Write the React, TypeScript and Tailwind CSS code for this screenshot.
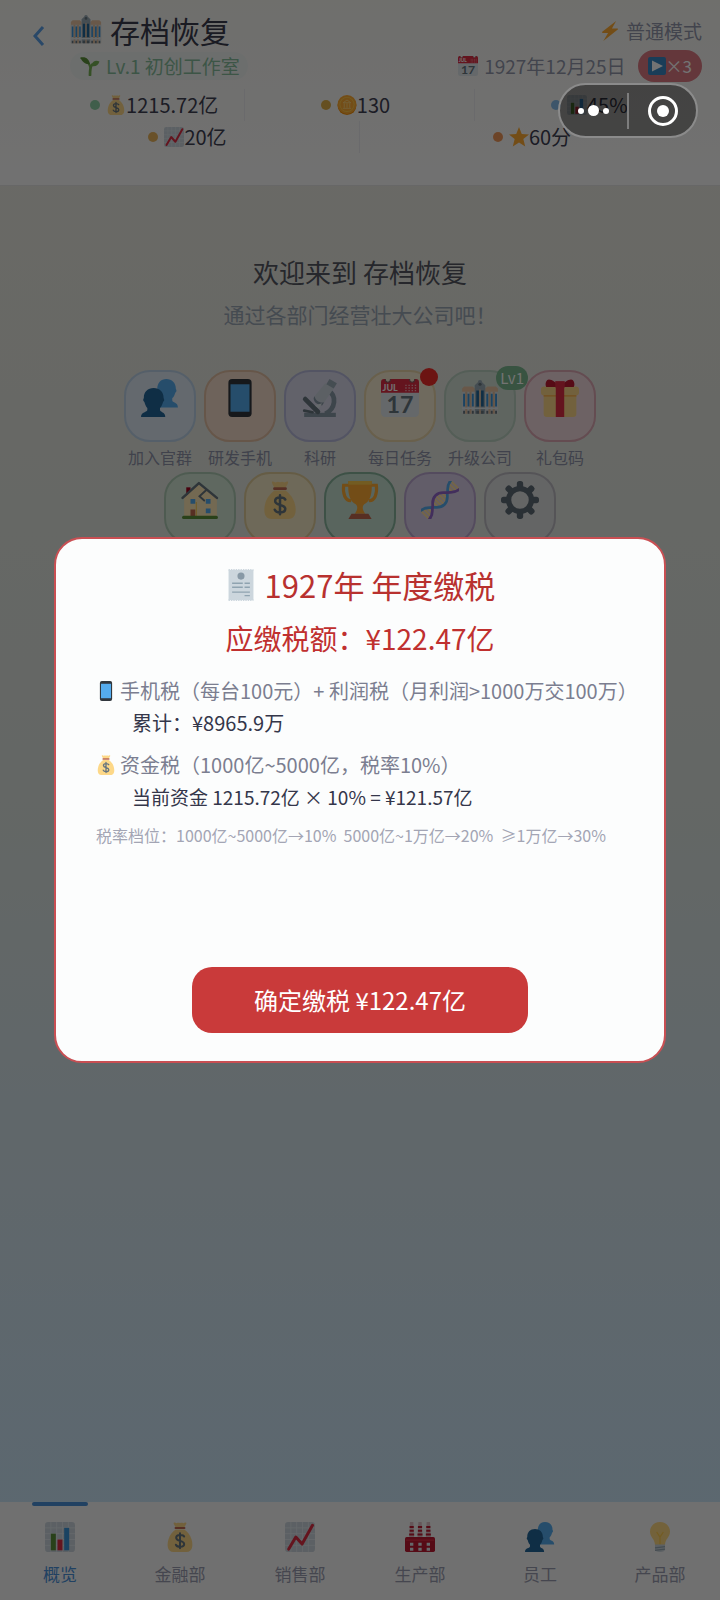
import React, { useState } from 'react';

type IconName =
  | 'building'
  | 'sprout'
  | 'bag'
  | 'coin'
  | 'bars'
  | 'trend'
  | 'star'
  | 'bolt'
  | 'calendar'
  | 'play'
  | 'people'
  | 'phone'
  | 'microscope'
  | 'gift'
  | 'house'
  | 'trophy'
  | 'dna'
  | 'gear'
  | 'receipt'
  | 'factory'
  | 'bulb';

type Tile = {
  label?: string;
  icon: IconName;
  color: string;
  dot?: boolean;
  badge?: string;
};

const TILES_TOP: Tile[] = [
  { label: '加入官群', icon: 'people', color: 'bg-[#dde8f4] border-[#bcd3e8]' },
  { label: '研发手机', icon: 'phone', color: 'bg-[#f4dccb] border-[#e2bea2]' },
  { label: '科研', icon: 'microscope', color: 'bg-[#d9d9ec] border-[#b8badc]' },
  { label: '每日任务', icon: 'calendar', color: 'bg-[#f6ebd0] border-[#e8d4a8]', dot: true },
  { label: '升级公司', icon: 'building', color: 'bg-[#d3e0d6] border-[#bad0c0]', badge: 'Lv1' },
  { label: '礼包码', icon: 'gift', color: 'bg-[#f2dade] border-[#dda8b4]' },
];

const TILES_BOTTOM: Tile[] = [
  { icon: 'house', color: 'bg-[#d3e6d5] border-[#aecbb3]' },
  { icon: 'bag', color: 'bg-[#f3e8c6] border-[#e0cd9a]' },
  { icon: 'trophy', color: 'bg-[#c5dfd1] border-[#88b49c]' },
  { icon: 'dna', color: 'bg-[#dacfe8] border-[#bba6d0]' },
  { icon: 'gear', color: 'bg-[#dedfe0] border-[#bcbac2]' },
];

const NAV: { label: string; icon: IconName }[] = [
  { label: '概览', icon: 'bars' },
  { label: '金融部', icon: 'bag' },
  { label: '销售部', icon: 'trend' },
  { label: '生产部', icon: 'factory' },
  { label: '员工', icon: 'people' },
  { label: '产品部', icon: 'bulb' },
];

const GEAR_TEETH = [0, 45, 90, 135, 180, 225, 270, 315];

function drawIcon(name: IconName) {
  switch (name) {
    case 'building':
      return (
        <>
          <path fill="#e8c3a2" d="M1 9l2-2h8l2 2v24H1zM23 9l2-2h8l2 2v24H23z" />
          <path fill="#99aab5" d="M13 6l3-3a2 2 0 0 1 4 0l3 3v27H13z" />
          <path fill="#d8dfe4" d="M1 12h12v21H1zM23 12h12v21H23z" />
          <path fill="#e0bd9c" d="M4 12h2v21H4zM8 12h2v21H8zM26 12h2v21h-2zM30 12h2v21h-2zM17.200 10h1.600v23h-1.600z" />
          <path fill="#3b94d9" d="M2 14h1.800v12H2zM6.200 14H8v12H6.200zM10.300 14h1.800v12h-1.800zM24 14h1.800v12H24zM28.200 14H30v12h-1.800zM32.300 14h1.800v12h-1.800z" />
          <path fill="#226699" d="M14.500 11h2.500v15h-2.500zM19 11h2.500v15H19z" />
          <path fill="#66757f" d="M2 30h1.800v3H2zM6.200 30H8v3H6.200zM10.300 30h1.800v3h-1.800zM14.500 30h2.500v3h-2.500zM19 30h2.500v3H19zM24 30h1.800v3H24zM28.200 30H30v3h-1.800zM32.300 30h1.800v3h-1.800z" />
          <path fill="#e1e8ed" d="M1 27h34v1.500H1z" />
          <circle cx="18" cy="5" r="1.500" fill="#66757f" />
        </>
      );
    case 'sprout':
      return (
        <>
          <path d="M18 34c0-7 0-13 3-18" fill="none" stroke="#77b255" strokeWidth="5" strokeLinecap="round" />
          <path d="M18 20C16 11 10 6 2 4" fill="none" stroke="#77b255" strokeWidth="3" strokeLinecap="round" />
          <path fill="#5c913b" d="M1 3c8-3 16 2 17 12C10 15 4 11 1 3z" />
          <path fill="#77b255" d="M35 10c-6-3-13-1-15 8 8 2 13-1 15-8z" />
        </>
      );
    case 'bag':
      return (
        <>
          <path fill="#fdd888" d="M31.900 21c-1.500-5.400-5.200-9.500-8.700-12H12.800C9.300 11.500 5.600 15.600 4.100 21 2 28 3 36 10 36h16c7 0 8-8 5.900-15z" />
          <path fill="#fdd888" d="M10.500.800c1.500-1 2.500 1 3.800.5 1.200-.6 2-.8 3.700 0 1.700-.8 2.500-.6 3.700 0 1.300.5 2.300-1.500 3.800-.5.800 1.400-2 4.300-2.600 6.200H13.100c-.6-1.900-3.400-4.800-2.600-6.200z" />
          <rect x="11.500" y="6" width="13" height="2.500" rx="1.200" fill="#bf6952" />
          <path d="M23 17.500c-.8-2.300-9.600-3.400-9.600 1.400 0 5 9.600 2.500 9.600 7.500 0 4.800-9 4-10 .8M18 13.500v18" fill="none" stroke="#67757f" strokeWidth="2.400" strokeLinecap="round" />
        </>
      );
    case 'coin':
      return (
        <>
          <circle cx="18" cy="19" r="17" fill="#f4900c" />
          <circle cx="18" cy="17" r="17" fill="#ffac33" />
          <circle cx="18" cy="17" r="13.500" fill="#ffcc4d" />
          <circle cx="18" cy="17" r="12" fill="#ffac33" />
          <path fill="none" stroke="#ffd983" strokeWidth="1.500" d="M11 14l7-5 7 5zM13 15v8M18 15v8M23 15v8M10.500 24h15" />
        </>
      );
    case 'bars':
      return (
        <>
          <rect width="36" height="36" rx="4" fill="#ccd6dd" />
          <path stroke="#e1e8ed" strokeWidth="1" d="M0 7h36M0 14h36M0 21h36M0 28h36M7 0v36M14 0v36M21 0v36M28 0v36" />
          <path fill="#5c913b" d="M7 14h6v20H7z" />
          <path fill="#dd2e44" d="M15 21h6v13h-6z" />
          <path fill="#3b94d9" d="M23 7h6v27h-6z" />
        </>
      );
    case 'trend':
      return (
        <>
          <rect width="36" height="36" rx="4" fill="#ccd6dd" />
          <path stroke="#e1e8ed" strokeWidth="1" d="M0 7h36M0 14h36M0 21h36M0 28h36M7 0v36M14 0v36M21 0v36M28 0v36" />
          <path d="M4.500 32.500L13 18l7.500 8.500L33 4" fill="none" stroke="#dd2e44" strokeWidth="3.600" strokeLinecap="round" strokeLinejoin="round" />
        </>
      );
    case 'star':
      return (
        <path fill="#ffac33" d="M18 0l5 12.500 13 .8-10.200 8.500L29.200 35 18 27.700 6.800 35l3.400-13.200L0 13.300l13-.8z" />
      );
    case 'bolt':
      return <path fill="#ffac33" d="M29 0L4 19.500c-1 1 0 2 1 2h9.500L6 36l26-20.500c1-1 0-2-1-2h-9.500z" />;
    case 'calendar':
      return (
        <>
          <path fill="#dfe6eb" d="M36 32a4 4 0 0 1-4 4H4a4 4 0 0 1-4-4V12h36z" />
          <path fill="#dd2e44" d="M0 13V3a3 3 0 0 1 3-3h1c0 4 5 4 5 0h18c0 4 5 4 5 0h1a3 3 0 0 1 3 3v10z" />
          <path fill="none" stroke="#8c5a62" strokeWidth="1" d="M4 0c0 4 5 4 5 0M27 0c0 4 5 4 5 0" />
          <path stroke="#f4abb4" strokeWidth="1.300" strokeDasharray="1.300 1.700" d="M23 6h11M23 8.500h11M23 11h11" />
          <text x="1.500" y="11.500" fontSize="8.500" fontWeight="700" fontFamily="Lato, sans-serif" fill="#fff">JUL</text>
          <text x="18" y="32" fontSize="22" fontWeight="700" textAnchor="middle" fontFamily="Lato, sans-serif" fill="#66757f">17</text>
        </>
      );
    case 'play':
      return (
        <>
          <rect width="36" height="36" rx="4" fill="#3b88c3" />
          <path fill="#fff" d="M8 7l22 11L8 29z" />
        </>
      );
    case 'people':
      return (
        <>
          <path
            fill="#55acee"
            d="M24 0c5.300 0 9 3.700 9 9 0 .7.600 1 .6 2.200 0 1.100-1 1.300-1.200 2-.8 2.600-1.400 3.800-2.800 5v2c0 2.800 5.400 1.500 5.400 6.800H17V20l-2-7c-.4-1-.4-3 .4-3.500C15.400 3.700 18.700 0 24 0z"
          />
          <path
            fill="#226699"
            d="M12 8.500c5.600 0 9.400 3.600 9.400 9.200 0 .8.600 1 .6 2.200 0 1.200-1 1.300-1.200 2.100-.6 2.500-1.500 4.200-2.800 5.400v1.800c0 2.800 5 1.600 5 6.800H0c0-5.200 6-4 6-6.800v-1.800C4.800 26.200 3.900 24.500 3.300 22c-.2-.8-1.200-.9-1.200-2.100 0-1.200.6-1.400.6-2.200 0-5.600 3.700-9.200 9.300-9.200z"
          />
        </>
      );
    case 'phone':
      return (
        <>
          <rect x="7" width="22" height="36" rx="3.500" fill="#31373d" />
          <rect x="9" y="5" width="18" height="26" fill="#55acee" />
        </>
      );
    case 'microscope':
      return (
        <>
          <path fill="#8899a6" d="M3 32h30v4H3z" />
          <path d="M26 11c8 5 7 17-3 22" fill="none" stroke="#8899a6" strokeWidth="4.500" />
          <path d="M4 19l12 12" stroke="#66757f" strokeWidth="4.500" strokeLinecap="round" />
          <path d="M3 30l8 1.500" stroke="#66757f" strokeWidth="2.500" strokeLinecap="round" />
          <path fill="#ccd6dd" d="M23 4l8 5-9 13c-4 1-9-2-9-6z" />
          <path fill="#8899a6" d="M13 16c0 4 5 7 9 6l-2 3c-5-1-8-3-8-7z" />
          <path fill="#99aab5" d="M27 0l7 4-3 5-7-4z" />
          <path fill="#e1e8ed" d="M20 23l-3 5-4-3z" />
        </>
      );
    case 'gift':
      return (
        <>
          <path fill="#fdd888" d="M2.500 15h31v18a3 3 0 0 1-3 3h-25a3 3 0 0 1-3-3z" />
          <path fill="#fcab40" d="M2.500 15h31v1.500h-31z" />
          <rect y="7" width="36" height="8.500" rx="3" fill="#fdd888" />
          <path fill="#dd2e44" d="M14 7h8v29h-8z" />
          <path fill="#be1931" d="M17 7.500C15 3 8-1 6 1 4 3 4 6 5 7.500zM19 7.500c2-4.500 9-8.500 11-6.500 2 2 2 5 1 6.500z" />
          <path fill="#dd2e44" d="M13.500 2h9v6h-9z" />
        </>
      );
    case 'house':
      return (
        <>
          <path fill="#a0041e" d="M5 6h4v8H5z" />
          <path fill="#ffe8b6" d="M3 16L16 3l18 12v19H3z" />
          <path fill="#ffcc4d" d="M14 20h1v14h-1z" />
          <path d="M1.500 16L17 2l17 14" fill="none" stroke="#66757f" strokeWidth="2.400" strokeLinecap="round" strokeLinejoin="round" />
          <path d="M24 8.500l-6.500 6 4.500 4" fill="none" stroke="#66757f" strokeWidth="1.800" strokeLinecap="round" />
          <path fill="#55acee" d="M9 17h4.500v4.500H9zM23.500 17H28v4.500h-4.500zM23.500 26H28v4.500h-4.500z" />
          <path fill="#c1694f" d="M9 27h4.500v7H9z" />
          <rect x="1" y="33" width="34" height="3" rx="1.500" fill="#5c913b" />
        </>
      );
    case 'trophy':
      return (
        <>
          <path d="M8 4H2.500c-1 8 1.500 15 7 14.500M28 4h5.500c1 8-1.500 15-7 14.500" fill="none" stroke="#ffac33" strokeWidth="3" />
          <path fill="#ffac33" d="M7 0h22c1 13-2 20-7 22-2 2-2 5 1 9H13c3-4 3-7 1-9C9 20 6 13 7 0z" />
          <path fill="#ffcc4d" d="M7 0h22v3.500H7z" />
          <path fill="#c1694f" d="M10 31h16l3 5H7z" />
        </>
      );
    case 'dna':
      return (
        // double helix drawn flat, then tilted
        <g transform="rotate(-45 18 18)" fill="none">
          <path
            stroke="#ffe0a0"
            strokeWidth="2"
            d="M-2 13v10M1 13.500v9M4 15.500v5M12 14.500v7M15 12.500v11M18 12v12M21 12.500v11M24 14.500v7M32 15.500v5M35 13.500v9M38 13v10"
          />
          <path
            stroke="#55acee"
            strokeWidth="2.600"
            strokeLinecap="round"
            d="M-4 12C4 12 5 16 8 18C11 20 12 24 18 24C24 24 25 20 28 18C31 16 32 12 40 12"
          />
          <path
            stroke="#9266cc"
            strokeWidth="2.600"
            strokeLinecap="round"
            d="M-4 24C4 24 5 20 8 18C11 16 12 12 18 12C24 12 25 16 28 18C31 20 32 24 40 24"
          />
        </g>
      );
    case 'gear':
      return (
        <>
          {GEAR_TEETH.map((a) => (
            <rect key={a} x="15" y="0" width="6" height="9" rx="2.500" fill="#5d6b75" transform={`rotate(${a} 18 18)`} />
          ))}
          <circle cx="18" cy="18" r="10.800" fill="none" stroke="#5d6b75" strokeWidth="5" />
        </>
      );
    case 'receipt':
      return (
        <>
          <path fill="#ccd6dd" d="M4 1h28v34H4z" />
          <path stroke="#ccd6dd" strokeWidth="2" strokeDasharray="1.500 1.200" d="M4 1h28M4 35h28" />
          <circle cx="18" cy="8" r="4" fill="#8899a6" />
          <path stroke="#8fa3b0" strokeWidth="1.500" d="M8 16h12M22 16h6M8 20.500h12M22 20.500h6M8 26h20M22 30h6" />
        </>
      );
    case 'factory':
      return (
        <>
          <path fill="#e1c4cb" d="M6 0h4l1 19H5zM16 0h4l1 19h-6zM26 0h4l1 19h-6z" />
          <path
            stroke="#be1931"
            strokeWidth="2.300"
            d="M5.500 6h5M5.500 10.500h5M5 15h6M15.500 6h5M15.500 10.500h5M15 15h6M25.500 6h5M25.500 10.500h5M25 15h6"
          />
          <rect y="18" width="36" height="18" rx="2" fill="#be1931" />
          <path fill="#dd2e44" d="M1 21h34v1.500H1z" />
          <path fill="#e1e8ed" d="M6 25h4v3.500H6zM16 25h4v3.500h-4zM26 25h4v3.500h-4zM6 31h4v3.500H6zM16 31h4v3.500h-4zM26 31h4v3.500h-4z" />
        </>
      );
    case 'bulb':
      return (
        <>
          <path fill="#ffd983" d="M30 11.500C30 5 24.600 0 18 0S6 5 6 11.500C6 19 12 20 12 28h12c0-8 6-9 6-16.500z" />
          <path d="M14 12l4 6 4-6M18 18v9" fill="none" stroke="#ffcc4d" strokeWidth="1.500" />
          <path fill="#ccd6dd" d="M12 27h12v6c0 2-2 3-6 3s-6-1-6-3z" />
          <path stroke="#99aab5" strokeWidth="1.500" d="M12 31l12-1.500M12 34l12-1.500" />
        </>
      );
  }
}

function Icon({ name, className }: { name: IconName; className: string }) {
  return (
    <svg viewBox="0 0 36 36" className={`shrink-0 ${className}`} aria-hidden="true">
      {drawIcon(name)}
    </svg>
  );
}

function Stat({
  dot,
  icon,
  value,
  className = '',
}: {
  dot: string;
  icon: IconName;
  value: string;
  className?: string;
}) {
  return (
    <div className={`flex h-8 items-center justify-center border-[#ececf0] ${className}`}>
      <span className={`mr-1.5 size-2.5 rounded-full ${dot}`} />
      <Icon name={icon} className="size-5" />
      <span className="text-xl text-[#3e4052]">{value}</span>
    </div>
  );
}

function Header() {
  return (
    <header className="border-b border-[#e4e4e4] bg-linear-to-b from-[#f6f5f0] to-[#fbfbfb] pt-2.5 pb-8">
      <div className="flex pr-[18px]">
        <button type="button" aria-label="返回" className="flex h-[52px] w-[70px] items-center justify-center pl-2">
          <svg viewBox="0 0 12 20" className="h-5 w-3" fill="none" stroke="#5b9fe6" strokeWidth="3">
            <path d="M10 1L2 10l8 9" />
          </svg>
        </button>
        <div className="flex-1 whitespace-nowrap">
          <h1 className="flex items-center gap-2 pb-0.5 text-[30px] leading-10 text-[#3a3c4e]">
            <Icon name="building" className="size-8" />
            存档恢复
          </h1>
          <div className="inline-flex h-7 items-center gap-1.5 rounded-full bg-[#f0f3f2] pr-2 pl-2.5 text-[19px] text-[#86bd9b]">
            <Icon name="sprout" className="size-5" />
            Lv.1 初创工作室
          </div>
        </div>
        <div className="flex flex-col items-end whitespace-nowrap text-[19px] text-[#9297ab]">
          <div className="flex h-[42px] items-center gap-1.5">
            <Icon name="bolt" className="size-5" />
            普通模式
          </div>
          <div className="flex h-7 items-center">
            <Icon name="calendar" className="mr-1.5 size-5" />
            1927年12月25日
            <button
              type="button"
              className="ml-3 flex h-8 items-center rounded-full bg-[#dd7b84] px-2.5 text-[17px] text-white"
            >
              <Icon name="play" className="size-[18px]" />
              ×3
            </button>
          </div>
        </div>
      </div>
      <div className="mt-2 px-4">
        <div className="grid grid-cols-3">
          <Stat dot="bg-[#8fd0a6]" icon="bag" value="1215.72亿" className="border-r pl-12" />
          <Stat dot="bg-[#dfb04a]" icon="coin" value="130" className="border-r pr-2" />
          <Stat dot="bg-[#87bdea]" icon="bars" value="45%" />
        </div>
        <div className="grid grid-cols-2">
          <Stat dot="bg-[#e8b45c]" icon="trend" value="20亿" className="border-r" />
          <Stat dot="bg-[#f0985a]" icon="star" value="60分" />
        </div>
      </div>
    </header>
  );
}

function TileButton({ tile }: { tile: Tile }) {
  return (
    <button type="button" aria-label={tile.label ?? tile.icon} className="flex w-[72px] flex-col items-center">
      <span className={`relative flex size-[72px] items-center justify-center rounded-[26px] border-2 pb-4 ${tile.color}`}>
        <Icon name={tile.icon} className="size-[38px]" />
        {tile.dot && <span className="absolute -top-1 -right-1 size-[18px] rounded-full bg-[#f02d28]" />}
        {tile.badge && (
          <span className="absolute -top-1.5 -right-3.5 rounded-full bg-[#7cb990] px-1 text-[15px] leading-6 text-white">
            {tile.badge}
          </span>
        )}
      </span>
      {tile.label && (
        <span className="text-base leading-[30px] whitespace-nowrap text-[#8f93a8]">{tile.label}</span>
      )}
    </button>
  );
}

function BottomNav() {
  const [active, setActive] = useState(0);

  return (
    <nav className="grid grid-cols-6 bg-[#f8f8f8]">
      {NAV.map((item, i) => (
        <button
          key={item.label}
          type="button"
          onClick={() => setActive(i)}
          className="relative flex h-[98px] flex-col items-center pt-5"
        >
          {i === active && <span className="absolute top-0 h-1 w-14 rounded-full bg-[#4a90d9]" />}
          <Icon name={item.icon} className="size-[30px]" />
          <span
            className={`mt-1.5 text-[17px] leading-8 ${i === active ? 'text-[#4a90d9]' : 'text-[#9a9cb0]'}`}
          >
            {item.label}
          </span>
        </button>
      ))}
    </nav>
  );
}

function TaxDialog() {
  return (
    <div className="fixed inset-0 flex items-center justify-center bg-black/55">
      <section
        role="dialog"
        aria-labelledby="tax-title"
        className="flex w-[85%] flex-col rounded-[28px] border-2 border-[#c94f53] bg-[#fcfdfd] px-5 pt-[22px] pb-7"
      >
        <h2
          id="tax-title"
          className="flex items-center justify-center gap-2 text-[31px] leading-12 whitespace-nowrap text-[#b8312f]"
        >
          <Icon name="receipt" className="size-8" />
          1927年 年度缴税
        </h2>
        <p className="mt-2 text-center text-[28px] leading-[42px] text-[#c0302f]">应缴税额：¥122.47亿</p>

        <div className="mt-4 pl-5 text-xl leading-8 whitespace-nowrap text-[#34364a]">
          <p className="flex items-center gap-1 text-[#7b7e90]">
            <Icon name="phone" className="size-5" />
            手机税（每台100元）+ 利润税（月利润&gt;1000万交100万）
          </p>
          <p className="pl-9">累计：¥8965.9万</p>
          <p className="mt-2.5 flex items-center gap-1 text-[#7b7e90]">
            <Icon name="bag" className="size-5" />
            资金税（1000亿~5000亿，税率10%）
          </p>
          <p className="pl-9 text-[19px]">当前资金 1215.72亿 × 10% = ¥121.57亿</p>
        </div>
        <p className="mt-2 pl-5 text-base leading-7 whitespace-pre text-[#a3a5b4]">
          {'税率档位：1000亿~5000亿→10%  5000亿~1万亿→20%  ≥1万亿→30%'}
        </p>

        <button
          type="button"
          className="mt-[118px] h-[66px] w-[336px] self-center rounded-[20px] bg-[#c93a3a] text-2xl text-white"
        >
          确定缴税 ¥122.47亿
        </button>
      </section>
    </div>
  );
}

/** Host app capsule: menu dots and close ring, floats over everything */
function Capsule() {
  return (
    <div className="fixed top-[83px] right-[22px] flex h-[55px] w-[140px] items-center rounded-full border-2 border-[#8b8b8b] bg-black/40">
      <button
        type="button"
        aria-label="更多"
        className="flex h-9 flex-1 items-center justify-center gap-1 border-r-2 border-[#7d7d7d]"
      >
        <span className="size-1.5 rounded-full bg-white" />
        <span className="size-[11px] rounded-full bg-white" />
        <span className="size-1.5 rounded-full bg-white" />
      </button>
      <button type="button" aria-label="关闭" className="flex flex-1 justify-center">
        <span className="flex size-[30px] items-center justify-center rounded-full border-3 border-white">
          <span className="size-3 rounded-full bg-white" />
        </span>
      </button>
    </div>
  );
}

export default function App() {
  return (
    <div className="flex min-h-screen flex-col bg-linear-to-b from-[#edeae2] via-[#dde4e0] to-[#cae6fb] font-['Noto_Sans_CJK_SC',sans-serif]">
      <Header />
      <main className="flex flex-1 flex-col items-center pt-[66px]">
        <h2 className="text-[26px] leading-10 text-[#555862]">欢迎来到 存档恢复</h2>
        <p className="text-[21px] leading-[44px] text-[#9aa6b4]">通过各部门经营壮大公司吧！</p>
        <div className="mt-[34px] flex justify-center gap-2">
          {TILES_TOP.map((t) => (
            <TileButton key={t.icon} tile={t} />
          ))}
        </div>
        <div className="flex justify-center gap-2">
          {TILES_BOTTOM.map((t) => (
            <TileButton key={t.icon} tile={t} />
          ))}
        </div>
      </main>
      <BottomNav />
      <TaxDialog />
      <Capsule />
    </div>
  );
}
